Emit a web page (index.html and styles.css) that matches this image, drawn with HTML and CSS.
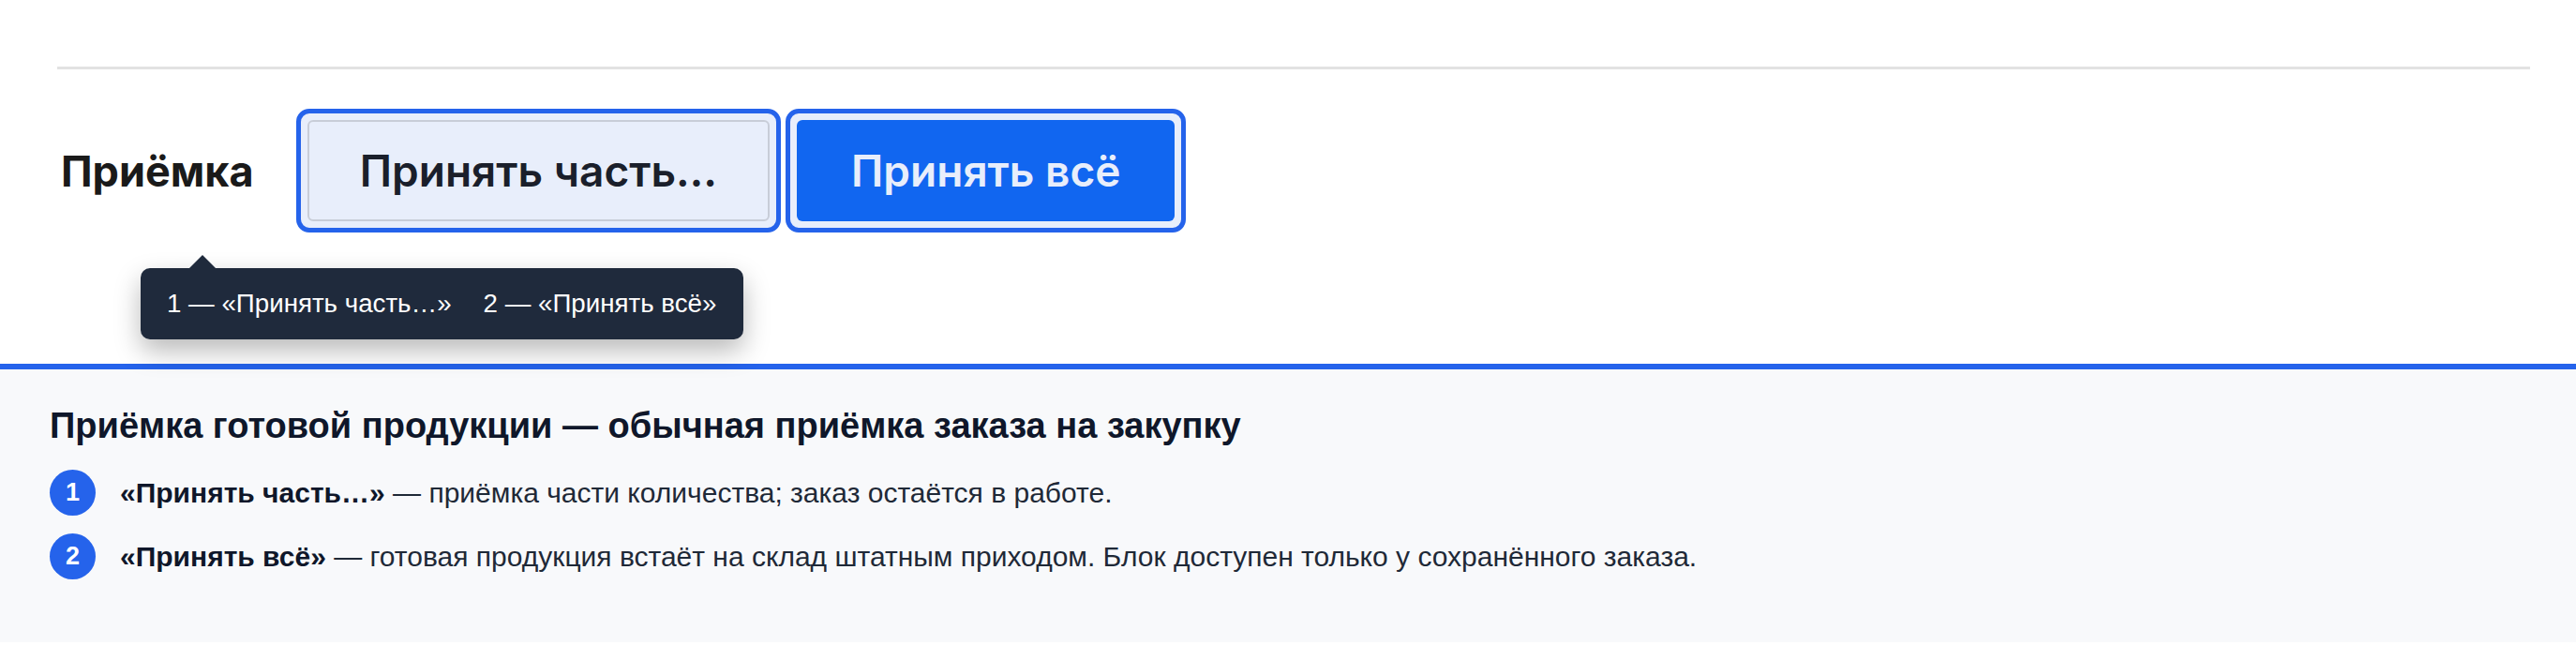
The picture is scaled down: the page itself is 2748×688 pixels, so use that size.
FILE: index.html
```html
<!DOCTYPE html>
<html lang="ru">
<head>
  <meta charset="UTF-8" />
  <title>Приёмка</title>
  <link rel="stylesheet" href="styles.css">
</head>
<body>
  <div class="stage">
    <hr class="divider">
    <div class="receive-row">
      <span class="receive-label">Приёмка</span>
      <div class="ring">
        <button class="btn btn-light">Принять часть…</button>
      </div>
      <div class="ring">
        <button class="btn btn-primary">Принять всё</button>
      </div>
    </div>
    <div class="tip">
      <span>1 — «Принять часть…»</span>
      <span>2 — «Принять всё»</span>
    </div>
  </div>

  <div class="legend">
    <h2>Приёмка готовой продукции — обычная приёмка заказа на закупку</h2>
    <ul>
      <li><span class="num">1</span><p><b>«Принять часть…»</b> — приёмка части количества; заказ остаётся в работе.</p></li>
      <li><span class="num">2</span><p><b>«Принять всё»</b> — готовая продукция встаёт на склад штатным приходом. Блок доступен только у сохранённого заказа.</p></li>
    </ul>
  </div>
</body>
</html>
```

FILE: styles.css
```css
body {
  margin: 0;
  background: #fff;
  font-family: 'Liberation Sans', Arial, sans-serif;
}
.stage {
  position: relative;
  height: 388px;
  padding: 71px 49px 0 61px;
  box-sizing: border-box;
}
.divider {
  margin: 0;
  border: none;
  height: 3px;
  background: #e2e2e2;
}
.receive-row {
  display: flex;
  align-items: center;
  gap: 5px;
  margin-top: 42px;
  padding-left: 4px;
  font-family: Inter, 'Noto Sans', sans-serif;
}
.receive-label {
  font-size: 45px;
  font-weight: 700;
  color: #1a1a1a;
  margin-right: 40px;
}
.ring {
  border: 5px solid #2563eb;
  border-radius: 14px;
  background: #e8eefb;
  padding: 7px;
  display: flex;
}
.btn {
  height: 108px;
  border-radius: 6px;
  font-family: inherit;
  font-size: 46px;
  font-weight: 600;
  cursor: pointer;
}
.btn-light {
  background: #e8eefb;
  border: 2px solid #c8cdd8;
  color: #1a1f2b;
  padding: 0 54px;
}
.btn-primary {
  background: #1166f0;
  border: none;
  color: #e8eefb;
  padding: 0 58px;
}
.tip {
  position: absolute;
  left: 150px;
  top: 286px;
  height: 76px;
  box-sizing: border-box;
  padding: 0 29px 0 28px;
  display: flex;
  align-items: center;
  gap: 34px;
  background: #1f2a3c;
  color: #fff;
  font-size: 27.7px;
  border-radius: 10px;
  box-shadow: 0 12px 28px rgba(0, 0, 0, 0.28);
}
.tip::before {
  content: "";
  position: absolute;
  left: 52px;
  top: -14px;
  border-left: 14px solid transparent;
  border-right: 14px solid transparent;
  border-bottom: 14px solid #1f2a3c;
}
.legend {
  border-top: 6px solid #2563eb;
  background: #f8f9fb;
  padding: 39px 0 0 53px;
  box-sizing: border-box;
  height: 297px;
}
.legend h2 {
  margin: 0 0 25px;
  font-size: 38px;
  font-weight: 700;
  color: #0f172a;
}
.legend ul {
  margin: 0;
  padding: 0;
  list-style: none;
  display: flex;
  flex-direction: column;
  gap: 19px;
}
.legend li {
  display: flex;
  align-items: center;
  gap: 26px;
}
.num {
  width: 49px;
  height: 49px;
  border-radius: 50%;
  background: #2563eb;
  color: #fff;
  font-weight: 700;
  font-size: 27px;
  display: flex;
  align-items: center;
  justify-content: center;
}
.legend p {
  margin: 0;
  font-size: 30px;
  color: #1f2937;
}
.legend b {
  color: #0f172a;
}
```
